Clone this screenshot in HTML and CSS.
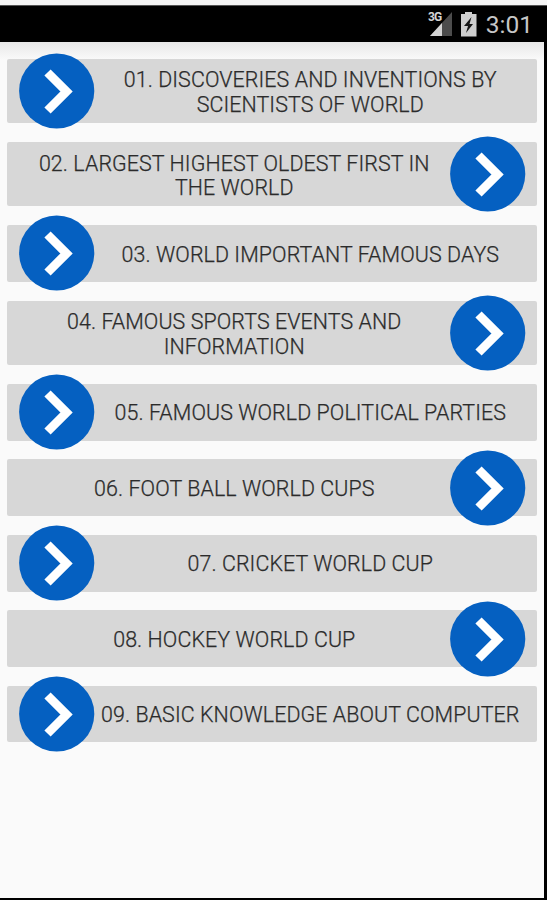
FILE: index.html
```html
<!DOCTYPE html>
<html lang="en">
<head>
<meta charset="utf-8">
<title>World Knowledge</title>
<link rel="stylesheet" href="styles.css">
</head>
<body>
<svg class="defs" aria-hidden="true"><symbol id="go" viewBox="0 0 76 76"><circle cx="37.7" cy="38" r="37.6" fill="#0560c1"/><path d="M28.500 19.500 L47.500 38.500 L28.500 57.500" fill="none" stroke="#fff" stroke-width="8.800"/></symbol></svg>
<header class="status">
<svg class="signal" viewBox="0 0 26 26"><path d="M24 1V25H2Z" fill="#4c4c4c"/><path d="M14 12V25H2Z" fill="#d4d4d4"/><text class="network" x="0" y="10">3G</text></svg>
<svg class="battery" viewBox="0 0 18 25"><path d="M5 0h7v2h4.500v22.500H1V2h4Z" fill="#cecece"/><path d="M11.500 5 4 14h4l-2 7 7-9H9.500Z" fill="#151515"/></svg>
<span class="time">3:01</span>
</header>
<main class="list">
<a class="item tall"><svg class="go"><use href="#go"/></svg><span class="label">01. DISCOVERIES AND INVENTIONS BY<br>SCIENTISTS OF WORLD</span></a>
<a class="item tall flip"><svg class="go"><use href="#go"/></svg><span class="label">02. LARGEST HIGHEST OLDEST FIRST IN<br>THE WORLD</span></a>
<a class="item"><svg class="go"><use href="#go"/></svg><span class="label">03. WORLD IMPORTANT FAMOUS DAYS</span></a>
<a class="item tall flip"><svg class="go"><use href="#go"/></svg><span class="label">04. FAMOUS SPORTS EVENTS AND<br>INFORMATION</span></a>
<a class="item"><svg class="go"><use href="#go"/></svg><span class="label">05. FAMOUS WORLD POLITICAL PARTIES</span></a>
<a class="item flip"><svg class="go"><use href="#go"/></svg><span class="label">06. FOOT BALL WORLD CUPS</span></a>
<a class="item"><svg class="go"><use href="#go"/></svg><span class="label">07. CRICKET WORLD CUP</span></a>
<a class="item flip"><svg class="go"><use href="#go"/></svg><span class="label">08. HOCKEY WORLD CUP</span></a>
<a class="item"><svg class="go"><use href="#go"/></svg><span class="label">09. BASIC KNOWLEDGE ABOUT COMPUTER</span></a>
</main>
</body>
</html>
```
FILE: styles.css
```css
* { box-sizing: border-box; }
body {
  margin: 0;
  height: 900px;
  padding-top: 5px;
  display: flex;
  flex-direction: column;
  overflow: hidden;
  background: #f5f5f5;
  font-family: Roboto, "Liberation Sans", sans-serif;
}
.defs { position: absolute; width: 0; height: 0; }
.status {
  flex: none;
  height: 37px;
  padding: 0 14px 0 0;
  display: flex;
  justify-content: flex-end;
  align-items: center;
  background: #000;
  border-top: 1px solid #555;
}
.signal { width: 26px; height: 26px; margin-right: 6px; overflow: visible; }
.network { font-size: 12px; font-weight: 700; fill: #d4d4d4; stroke: #000; stroke-width: 1px; paint-order: stroke; letter-spacing: -1px; }
.battery { width: 18px; height: 25px; margin-right: 8px; }
.time { font-size: 24.500px; line-height: 36px; padding-top: 2px; color: #c6c6c6; }
.list {
  flex: 1;
  padding: 16.700px 7.500px 0 7px;
  display: flex;
  flex-direction: column;
  gap: 18.700px;
  background: linear-gradient(#e8e8e8, #fafafa 18px);
  border-right: 3px solid #000;
  border-bottom: 2px solid #000;
}
.item {
  flex: none;
  height: 56.800px;
  padding: 0 11px 0 12px;
  display: flex;
  align-items: center;
  background: #d7d7d7;
  border-radius: 2px;
}
.tall { height: 64.500px; }
.flip { flex-direction: row-reverse; }
.go { flex: none; width: 76px; height: 76px; }
.label {
  flex: 1;
  padding-top: 3px;
  text-align: center;
  white-space: nowrap;
  font-size: 21.420px;
  font-weight: 300;
  letter-spacing: 0.090px;
  -webkit-text-stroke: 0.250px #2b2b2b;
  line-height: 24.500px;
  color: #2b2b2b;
}
.tall .label { padding-top: 4px; }
```
